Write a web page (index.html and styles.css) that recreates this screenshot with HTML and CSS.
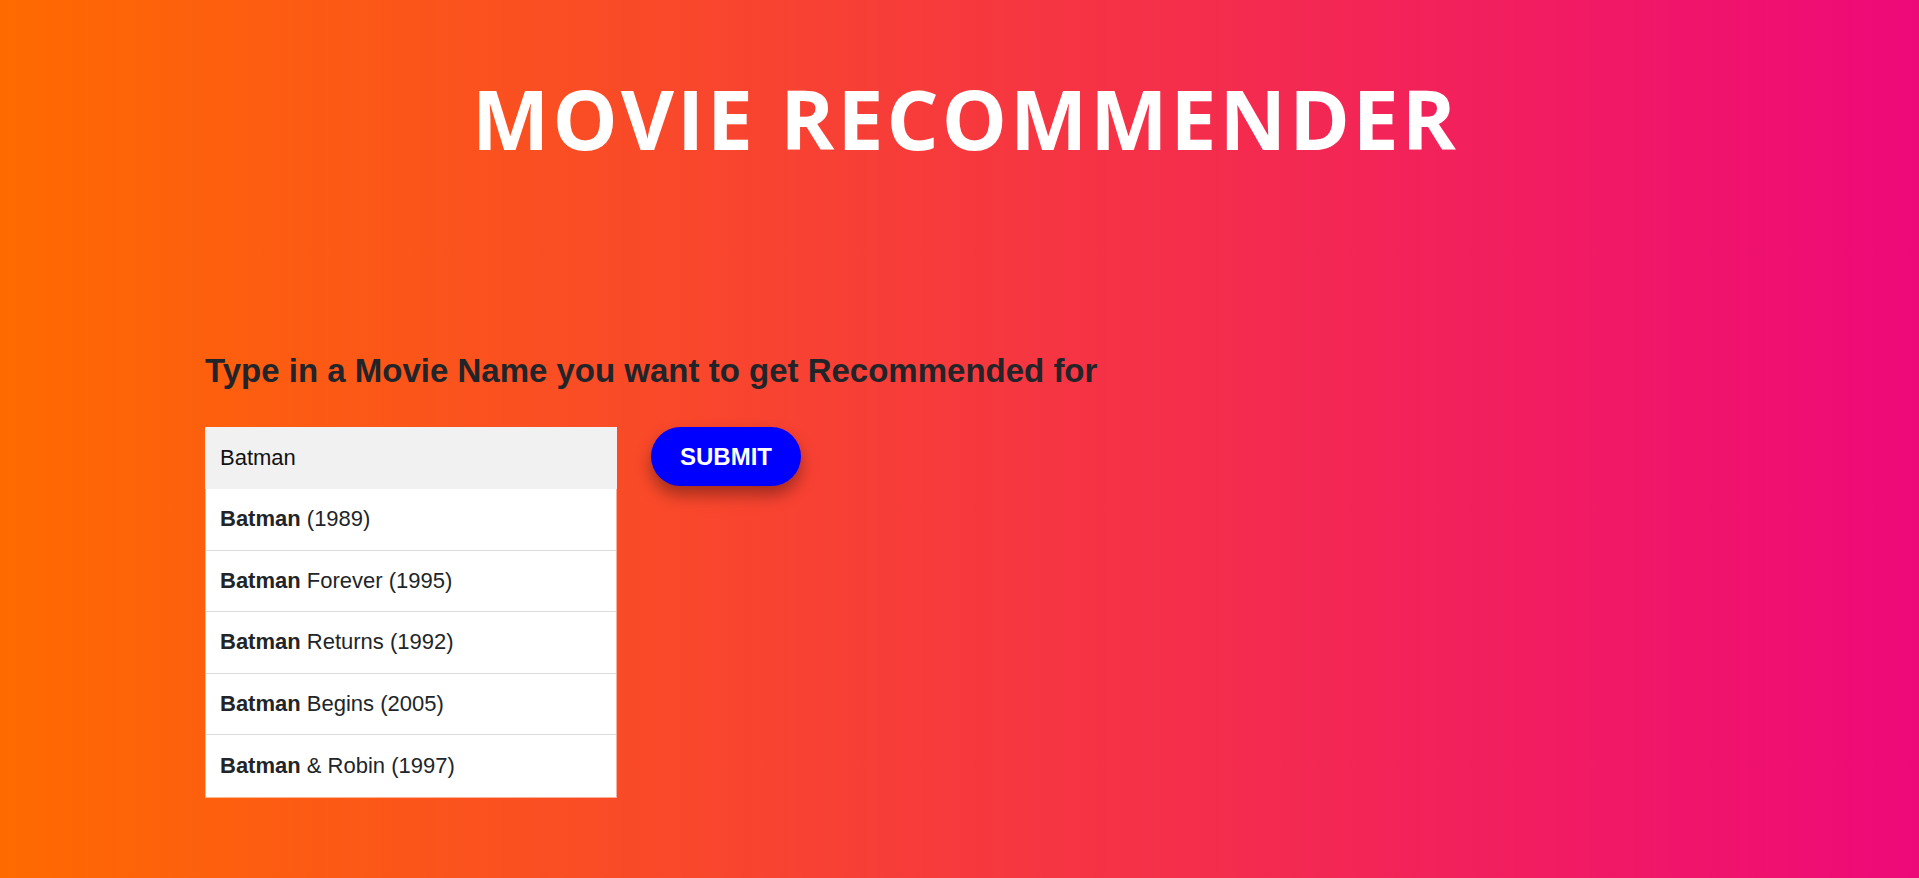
FILE: index.html
```html
<!DOCTYPE html>
<html lang="en">
<head>
<meta charset="utf-8">
<title>Movie Recommender</title>
<link rel="stylesheet" href="styles.css">
</head>
<body>
<header class="header">
  <h1 class="title">MOVIE RECOMMENDER</h1>
</header>
<main class="content">
  <h3 class="prompt">Type in a Movie Name you want to get Recommended for</h3>
  <form class="search" autocomplete="off">
    <div class="autocomplete">
      <input class="search-input" type="text" value="Batman">
      <div class="autocomplete-items">
        <div class="item"><strong>Batman</strong> (1989)</div>
        <div class="item"><strong>Batman</strong> Forever (1995)</div>
        <div class="item"><strong>Batman</strong> Returns (1992)</div>
        <div class="item"><strong>Batman</strong> Begins (2005)</div>
        <div class="item"><strong>Batman</strong> &amp; Robin (1997)</div>
      </div>
    </div>
    <button class="submit" type="button">SUBMIT</button>
  </form>
</main>
</body>
</html>
```
FILE: styles.css
```css
html, body {
  margin: 0;
  padding: 0;
}
body {
  width: 1919px;
  height: 878px;
  overflow: hidden;
  background: linear-gradient(90deg, #ff6a00 0%, #ee0979 100%);
  font-family: "Liberation Sans", Arial, sans-serif;
  color: #212529;
}
.header {
  display: flex;
  justify-content: center;
  padding-top: 63px;
  padding-left: 12px;
}
.title {
  margin: 0;
  font-family: "Open Sans", sans-serif;
  font-weight: 700;
  font-size: 82px;
  line-height: 110px;
  letter-spacing: 3px;
  color: #fff;
}
.content {
  padding-left: 205px;
  padding-top: 179px;
}
.prompt {
  margin: 0 0 37px 0;
  font-size: 33px;
  font-weight: 700;
  line-height: 38px;
  color: #212529;
}
.search {
  display: flex;
  align-items: flex-start;
  gap: 34px;
}
.autocomplete {
  width: 412px;
  display: flex;
  flex-direction: column;
}
.search-input {
  box-sizing: border-box;
  width: 412px;
  height: 62px;
  margin: 0;
  border: none;
  outline: none;
  padding: 0 15px;
  background: #f1f1f1;
  font-family: "Liberation Sans", Arial, sans-serif;
  font-size: 22px;
  color: #111;
}
.autocomplete-items {
  box-sizing: border-box;
  width: 412px;
  border: 1px solid rgba(255, 255, 255, 0.55);
  border-top: none;
}
.item {
  box-sizing: border-box;
  height: 61.6px;
  display: flex;
  align-items: center;
  padding: 0 14px;
  background: #fff;
  border-bottom: 1px solid #dcdcdc;
  font-size: 22px;
  color: #212529;
  white-space: pre;
}
.item:last-child {
  border-bottom: none;
}
.item strong {
  font-weight: 700;
}
.submit {
  box-sizing: border-box;
  width: 150px;
  height: 59px;
  border: none;
  border-radius: 30px;
  background: #0000ff;
  color: #fff;
  font-family: "Liberation Sans", Arial, sans-serif;
  font-size: 24px;
  font-weight: 700;
  box-shadow: 0 9px 16px rgba(0, 0, 0, 0.35);
  cursor: pointer;
}
```
